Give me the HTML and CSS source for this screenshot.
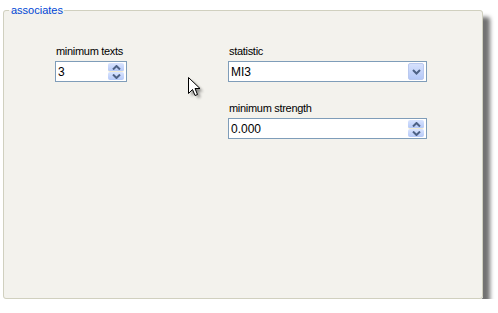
FILE: index.html
```html
<!DOCTYPE html>
<html>
<head>
<meta charset="utf-8">
<link rel="stylesheet" href="styles.css">
</head>
<body>
<fieldset class="panel">
  <legend class="legend">associates</legend>
  <div class="cols">
    <div class="col col-left">
      <div class="field">
        <label class="label">minimum texts</label>
        <div class="input spin">
          <span class="value">3</span>
          <span class="spinbtns">
            <span class="sbtn up"><svg width="9" height="5" viewBox="0 0 9 5"><path d="M1 4.5 L4.5 1 L8 4.5" fill="none" stroke="#4d6185" stroke-width="2"/></svg></span>
            <span class="sbtn down"><svg width="9" height="5" viewBox="0 0 9 5"><path d="M1 0.5 L4.5 4 L8 0.5" fill="none" stroke="#4d6185" stroke-width="2"/></svg></span>
          </span>
        </div>
      </div>
    </div>
    <div class="col col-right">
      <div class="field">
        <label class="label">statistic</label>
        <div class="input select">
          <span class="value">MI3</span>
          <span class="dropbtn"><svg width="9" height="6" viewBox="0 0 9 6"><path d="M1 1 L4.5 4.5 L8 1" fill="none" stroke="#4d6185" stroke-width="2"/></svg></span>
        </div>
      </div>
      <div class="field field-gap">
        <label class="label">minimum strength</label>
        <div class="input spin">
          <span class="value">0.000</span>
          <span class="spinbtns">
            <span class="sbtn up"><svg width="9" height="5" viewBox="0 0 9 5"><path d="M1 4.5 L4.5 1 L8 4.5" fill="none" stroke="#4d6185" stroke-width="2"/></svg></span>
            <span class="sbtn down"><svg width="9" height="5" viewBox="0 0 9 5"><path d="M1 0.5 L4.5 4 L8 0.5" fill="none" stroke="#4d6185" stroke-width="2"/></svg></span>
          </span>
        </div>
      </div>
    </div>
  </div>
  <svg class="cursor" width="16" height="24" viewBox="0 0 16 24">
    <defs><filter id="sh" x="-50%" y="-50%" width="200%" height="200%"><feGaussianBlur stdDeviation="1.6"/></filter></defs>
    <path d="M3.5 3.5 L3.5 19.5 L7.5 15.5 L10 21 L12.5 20 L10 14.5 L15 14.5 Z" fill="#000" opacity="0.45" filter="url(#sh)"/>
    <path d="M0.5 0.5 L0.5 16.5 L4.5 12.5 L7 18.5 L9.5 17.5 L7 11.5 L12 11.5 Z" fill="#fff" stroke="#000" stroke-width="1"/>
  </svg>
</fieldset>
</body>
</html>
```

FILE: styles.css
```css
html, body {
  margin: 0;
  padding: 0;
  background: #ffffff;
}
body {
  font-family: "Liberation Sans", Arial, sans-serif;
  font-size: 11px;
  color: #000;
}
.panel {
  position: relative;
  box-sizing: border-box;
  width: 480px;
  height: 295px;
  margin: 4px 0 0 3px;
  padding: 0;
  border: 1px solid #d0d0bf;
  border-radius: 3px;
  background: #f3f2ed;
  box-shadow: 7px 7px 4px #727272;
  min-width: 0;
}
.legend {
  margin-left: 5px;
  padding: 0 1px 0 2px;
  color: #0046d5;
  font-size: 11px;
  line-height: 13px;
}
.cols {
  display: flex;
  padding: 28px 0 0 51px;
}
.col-left {
  width: 72px;
}
.col-right {
  margin-left: 101px;
  width: 199px;
}
.field {
  display: flex;
  flex-direction: column;
}
.field-gap {
  margin-top: 20px;
}
.label {
  line-height: 13px;
  margin: 0 0 3px 1px;
  letter-spacing: -0.3px;
}
.input {
  position: relative;
  box-sizing: border-box;
  height: 21px;
  border: 1px solid #7f9db9;
  background: #fff;
  display: flex;
  align-items: center;
  justify-content: space-between;
  padding: 0 1px 0 2px;
}
.value {
  font-size: 12px;
  line-height: 14px;
}
.spinbtns {
  display: flex;
  flex-direction: column;
  width: 16px;
  height: 17px;
  margin-right: 1px;
}
.sbtn {
  flex: 1;
  display: flex;
  align-items: center;
  justify-content: center;
  background: linear-gradient(#d9e4fe, #b5c9f8);
  border-radius: 2px;
}
.sbtn.up {
  border-bottom: 1px solid #f1ead0;
}
.dropbtn {
  width: 16px;
  height: 17px;
  margin-right: 1px;
  display: flex;
  align-items: center;
  justify-content: center;
  background: linear-gradient(#d6e1fd, #b4c8f7);
  border: 1px solid #bac9ef;
  box-sizing: border-box;
  border-radius: 2px;
}
.cursor {
  position: absolute;
  left: 184px;
  top: 60px;
  overflow: visible;
}
```
